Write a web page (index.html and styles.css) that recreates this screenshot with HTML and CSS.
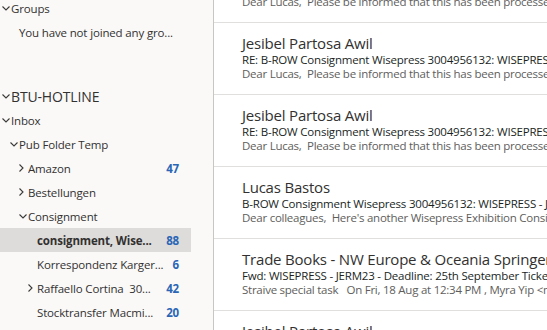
FILE: index.html
```html
<!DOCTYPE html>
<html lang="en">
<head>
    <meta charset="UTF-8">
    <meta name="viewport" content="width=device-width, initial-scale=1.0">
    <title>Mail</title>
    <link rel="stylesheet" href="styles.css">
</head>
<body>
    <div class="app">
        <!-- Folder pane -->
        <nav class="folders">
            <div class="folder lvl0"><span class="chev"><svg width="8" height="5" viewBox="0 0 8 5"><path d="M0.5 0.5 L4 4 L7.5 0.5" /></svg></span><span class="name">Groups</span></div>
            <div class="folder note">You have not joined any gro...</div>
            <div class="spacer"></div>
            <div class="folder account lvl0"><span class="chev"><svg width="8" height="5" viewBox="0 0 8 5"><path d="M0.5 0.5 L4 4 L7.5 0.5" /></svg></span><span class="name">BTU-HOTLINE</span></div>
            <div class="folder lvl0"><span class="chev"><svg width="8" height="5" viewBox="0 0 8 5"><path d="M0.5 0.5 L4 4 L7.5 0.5" /></svg></span><span class="name">Inbox</span></div>
            <div class="folder lvl1"><span class="chev"><svg width="8" height="5" viewBox="0 0 8 5"><path d="M0.5 0.5 L4 4 L7.5 0.5" /></svg></span><span class="name">Pub Folder Temp</span></div>
            <div class="folder lvl2"><span class="chev"><svg width="5" height="8" viewBox="0 0 5 8"><path d="M0.5 0.5 L4 4 L0.5 7.5" /></svg></span><span class="name">Amazon</span><span class="count">47</span></div>
            <div class="folder lvl2"><span class="chev"><svg width="5" height="8" viewBox="0 0 5 8"><path d="M0.5 0.5 L4 4 L0.5 7.5" /></svg></span><span class="name">Bestellungen</span></div>
            <div class="folder lvl2"><span class="chev"><svg width="8" height="5" viewBox="0 0 8 5"><path d="M0.5 0.5 L4 4 L7.5 0.5" /></svg></span><span class="name">Consignment</span></div>
            <div class="folder lvl3 selected"><span class="chev"></span><span class="name">consignment, Wise...</span><span class="count">88</span></div>
            <div class="folder lvl3"><span class="chev"></span><span class="name">Korrespondenz Karger...</span><span class="count">6</span></div>
            <div class="folder lvl3"><span class="chev"><svg width="5" height="8" viewBox="0 0 5 8"><path d="M0.5 0.5 L4 4 L0.5 7.5" /></svg></span><span class="name">Raffaello Cortina&nbsp; 30...</span><span class="count">42</span></div>
            <div class="folder lvl3"><span class="chev"></span><span class="name">Stocktransfer Macmi...</span><span class="count">20</span></div>
        </nav>

        <!-- Message list -->
        <main class="messages">
            <div class="message">
                <div class="sender">Jesibel Partosa Awil</div>
                <div class="subject">RE: B-ROW Consignment Wisepress 3004956132: WISEPRESS - JERM23</div>
                <div class="preview">Dear Lucas,  Please be informed that this has been processed.</div>
            </div>
            <div class="message">
                <div class="sender">Jesibel Partosa Awil</div>
                <div class="subject">RE: B-ROW Consignment Wisepress 3004956132: WISEPRESS - JERM23</div>
                <div class="preview">Dear Lucas,  Please be informed that this has been processed.</div>
            </div>
            <div class="message">
                <div class="sender">Jesibel Partosa Awil</div>
                <div class="subject">RE: B-ROW Consignment Wisepress 3004956132: WISEPRESS - JERM23</div>
                <div class="preview">Dear Lucas,  Please be informed that this has been processed.</div>
            </div>
            <div class="message">
                <div class="sender">Lucas Bastos</div>
                <div class="subject">B-ROW Consignment Wisepress 3004956132: WISEPRESS - JERM23</div>
                <div class="preview">Dear colleagues,  Here's another Wisepress Exhibition Consignment</div>
            </div>
            <div class="message">
                <div class="sender">Trade Books - NW Europe &amp; Oceania Springer Nature</div>
                <div class="subject">Fwd: WISEPRESS - JERM23 - Deadline: 25th September Ticket</div>
                <div class="preview">Straive special task   On Fri, 18 Aug at 12:34 PM , Myra Yip &lt;myra.yip@straive.com&gt;</div>
            </div>
            <div class="message">
                <div class="sender">Jesibel Partosa Awil</div>
                <div class="subject">RE: B-ROW Consignment Wisepress 3004956132: WISEPRESS - JERM23</div>
                <div class="preview">Dear Lucas,  Please be informed that this has been processed.</div>
            </div>
        </main>
    </div>
</body>
</html>
```

FILE: styles.css
```css
/* General Styles */
body {
    margin: 0;
    padding: 0;
    font-family: 'Open Sans', 'Noto Sans', sans-serif;
    background-color: #fff;
    color: #323130;
    overflow: hidden;
}

.app {
    display: flex;
    height: 330px;
    overflow: hidden;
}

/* Folder pane */
.folders {
    width: 214px;
    flex-shrink: 0;
    background-color: #faf9f8;
    border-right: 1px solid #c8c6c4;
    padding-right: 22px;
    box-sizing: border-box;
    margin-top: -4px;
}

.folder {
    display: flex;
    align-items: center;
    height: 24px;
    font-size: 11.5px;
    letter-spacing: -0.15px;
    white-space: nowrap;
    padding-right: 12px;
}

.folder .chev {
    width: 9px;
    display: flex;
    align-items: center;
    flex-shrink: 0;
}

.folder svg path {
    fill: none;
    stroke: #3b3a39;
    stroke-width: 1.1;
}

.folder .name {
    flex: 1;
    min-width: 0;
    overflow: hidden;
}

.folder .count {
    color: #2a66b5;
    font-weight: bold;
    margin-left: 6px;
}

.lvl0 { padding-left: 2px; }
.lvl1 { padding-left: 10px; }
.lvl2 { padding-left: 19px; }
.lvl3 { padding-left: 28px; }

.folder.note {
    padding-left: 19px;
}

.folder.account {
    font-size: 14px;
}

.folder.selected {
    background-color: #dedcdb;
}

.folder.selected .name {
    font-weight: bold;
}

.spacer {
    height: 40px;
}

/* Message list */
.messages {
    flex: 1;
    min-width: 0;
    overflow: hidden;
    margin-top: -49px;
}

.message {
    height: 61px;
    padding: 10px 0 0 28px;
    border-bottom: 1px solid #e1dfdd;
    overflow: hidden;
}

.sender,
.subject,
.preview {
    white-space: pre;
}

.sender {
    font-size: 15px;
    line-height: 20px;
    letter-spacing: -0.2px;
    color: #323130;
}

.subject {
    font-size: 11.5px;
    line-height: 14px;
    letter-spacing: -0.2px;
    color: #201f1e;
}

.preview {
    font-size: 11.5px;
    line-height: 14px;
    letter-spacing: -0.25px;
    color: #605e5c;
}
```
